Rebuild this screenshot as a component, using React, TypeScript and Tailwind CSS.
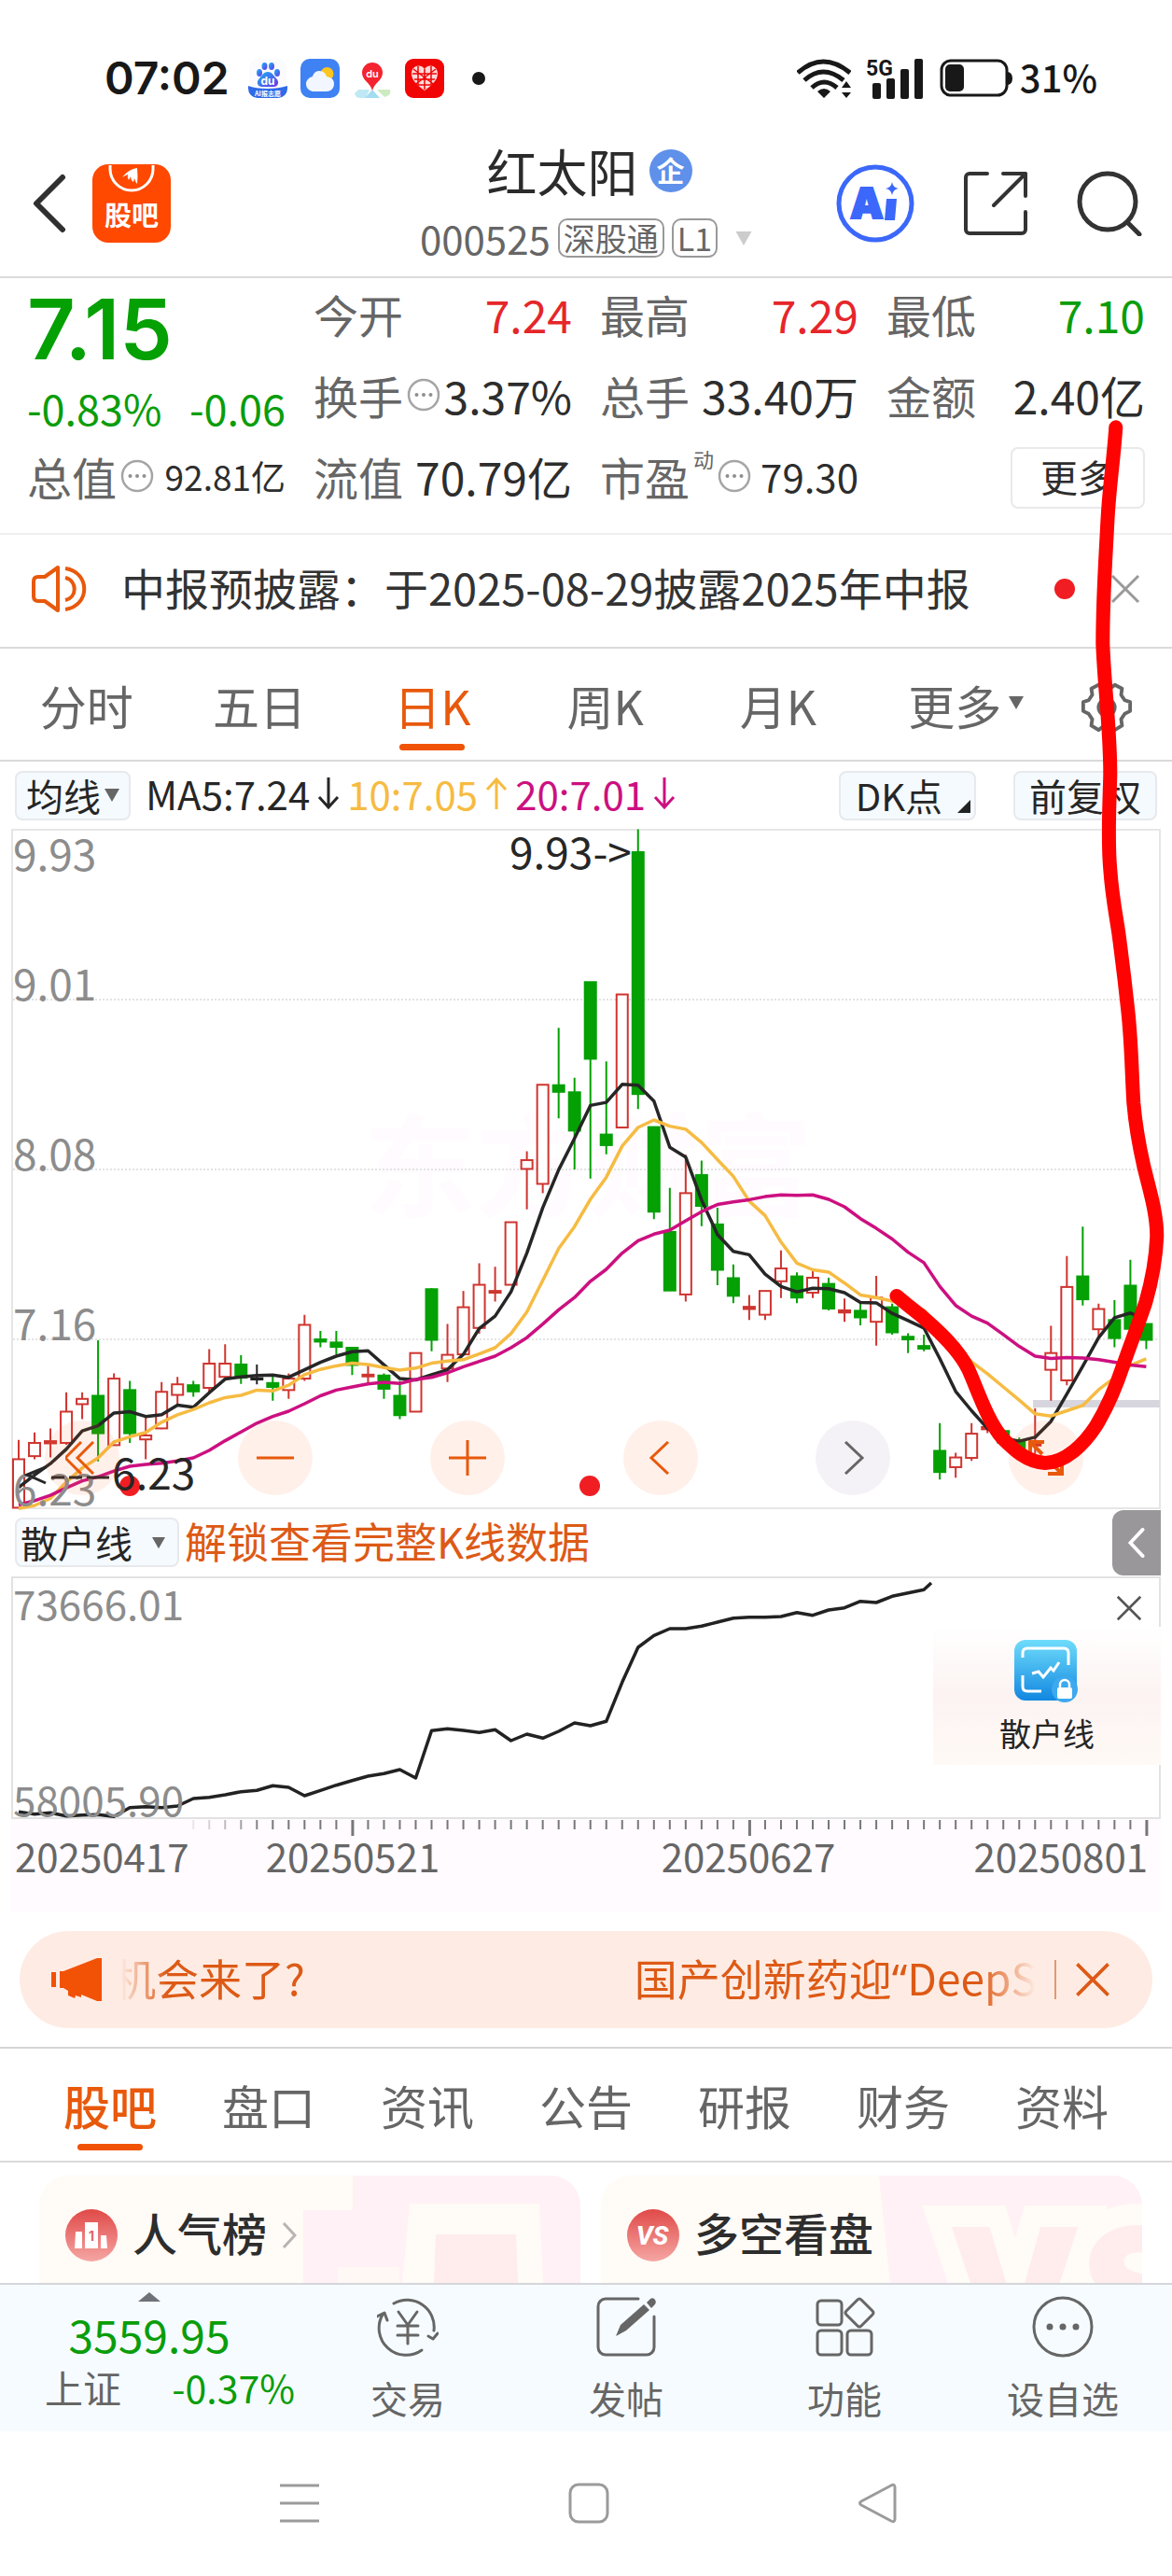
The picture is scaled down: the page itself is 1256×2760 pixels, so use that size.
import React from 'react';

type Candle = [kind: 'up' | 'down' | 'flat', high: number, top: number, bottom: number, low: number];

// Daily candles in plot units, 0 is the top of the plot and it grows downwards
const candles: Candle[] = [
  ['up', 1404, 1448, 1558, 1558], ['up', 1387, 1411, 1441, 1448], ['up', 1378, 1407, 1412, 1444],
  ['up', 1296, 1340, 1411, 1415], ['up', 1296, 1311, 1323, 1357], ['down', 1178, 1304, 1389, 1453],
  ['up', 1253, 1265, 1416, 1416], ['down', 1270, 1291, 1389, 1411], ['up', 1353, 1394, 1403, 1448],
  ['up', 1273, 1295, 1378, 1380], ['up', 1261, 1278, 1302, 1325], ['down', 1270, 1280, 1294, 1306],
  ['up', 1198, 1231, 1286, 1298], ['up', 1187, 1231, 1261, 1263], ['down', 1212, 1233, 1263, 1277],
  ['flat', 1233, 1264, 1267, 1278], ['down', 1260, 1275, 1284, 1315], ['up', 1253, 1265, 1291, 1311],
  ['up', 1120, 1143, 1265, 1270], ['down', 1157, 1176, 1181, 1194], ['down', 1157, 1183, 1193, 1210],
  ['down', 1193, 1195, 1234, 1257], ['up', 1233, 1256, 1260, 1275], ['down', 1253, 1258, 1288, 1311],
  ['down', 1270, 1304, 1348, 1357], ['up', 1207, 1207, 1340, 1340], ['down', 1060, 1062, 1177, 1203],
  ['up', 1141, 1211, 1242, 1273], ['up', 1066, 1103, 1210, 1210], ['up', 1003, 1052, 1150, 1163],
  ['up', 1011, 1066, 1070, 1090], ['up', 910, 910, 1052, 1052], ['up', 749, 769, 789, 881],
  ['up', 598, 598, 823, 844], ['down', 469, 599, 614, 674], ['down', 582, 615, 702, 790],
  ['down', 365, 365, 539, 811], ['down', 545, 711, 735, 756], ['up', 393, 393, 695, 695],
  ['down', 18, 70, 619, 653], ['down', 694, 694, 886, 903], ['down', 832, 932, 1065, 1065],
  ['up', 757, 844, 1074, 1090], ['down', 770, 803, 873, 919], ['down', 877, 915, 1018, 1053],
  ['down', 1006, 1037, 1077, 1094], ['up', 1075, 1102, 1107, 1132], ['up', 1066, 1066, 1120, 1132],
  ['up', 974, 1015, 1044, 1082], ['down', 1024, 1033, 1081, 1094], ['up', 1020, 1036, 1070, 1082],
  ['down', 1036, 1050, 1106, 1110], ['up', 1083, 1110, 1115, 1136], ['down', 1094, 1111, 1126, 1144],
  ['up', 1032, 1081, 1136, 1190], ['down', 1095, 1103, 1160, 1165], ['down', 1162, 1170, 1176, 1207],
  ['down', 1165, 1191, 1197, 1203], ['down', 1366, 1429, 1477, 1494], ['up', 1433, 1444, 1466, 1490],
  ['up', 1366, 1390, 1445, 1452], ['up', 1360, 1375, 1380, 1389], ['down', 1380, 1384, 1410, 1410],
  ['down', 1399, 1405, 1425, 1430], ['up', 1332, 1413, 1417, 1440], ['up', 1145, 1207, 1245, 1315],
  ['up', 987, 1057, 1269, 1280], ['down', 920, 1033, 1085, 1099], ['up', 1095, 1107, 1153, 1170],
  ['down', 1087, 1132, 1173, 1194], ['down', 995, 1054, 1152, 1175], ['down', 1141, 1141, 1177, 1198],
];

const ma5 = [
  1512, 1484, 1458, 1425, 1384, 1372, 1343, 1340, 1351, 1347, 1325, 1330, 1297, 1266, 1261, 1258, 1257, 1262,
  1245, 1228, 1214, 1204, 1202, 1234, 1265, 1268, 1256, 1245, 1210, 1151, 1123, 1068, 980, 877, 791, 720, 645,
  638, 597, 599, 635, 740, 762, 860, 938, 976, 984, 1028, 1056, 1068, 1060, 1061, 1070, 1092, 1093, 1117, 1133,
  1150, 1220, 1294, 1338, 1378, 1400, 1407, 1398, 1362, 1300, 1237, 1172, 1127, 1116, 1130,
];

const ma10 = [
  1560, 1553, 1537, 1500, 1468, 1445, 1409, 1397, 1387, 1364, 1347, 1335, 1320, 1308, 1303, 1291, 1293, 1280,
  1256, 1244, 1236, 1230, 1233, 1240, 1246, 1241, 1230, 1225, 1222, 1209, 1195, 1163, 1114, 1042, 970, 920, 858,
  808, 737, 695, 678, 692, 699, 729, 768, 806, 862, 895, 955, 1003, 1018, 1023, 1048, 1075, 1081, 1089, 1098,
  1110, 1150, 1190, 1227, 1254, 1284, 1314, 1345, 1350, 1338, 1326, 1290, 1263, 1235, 1220,
];

const ma20 = [
  1552, 1542, 1530, 1513, 1497, 1488, 1475, 1464, 1460, 1457, 1452, 1445, 1428, 1406, 1386, 1366, 1351, 1339,
  1322, 1304, 1291, 1284, 1277, 1273, 1276, 1267, 1262, 1252, 1238, 1226, 1214, 1195, 1172, 1141, 1109, 1081,
  1044, 1017, 980, 952, 937, 928, 907, 886, 870, 864, 859, 852, 848, 849, 848, 858, 875, 902, 924, 948, 978,
  1002, 1056, 1099, 1123, 1139, 1165, 1192, 1214, 1219, 1217, 1218, 1222, 1228, 1234, 1238,
];

const retail = [
  1027, 1034, 1030, 1040, 1037, 1036, 1042, 1013, 1010, 1013, 1008, 984, 980, 972, 962, 958, 943, 948, 975, 958,
  941, 926, 912, 904, 891, 918, 766, 760, 765, 772, 763, 798, 777, 790, 768, 741, 750, 736, 610, 498, 460, 438,
  438, 430, 417, 404, 401, 401, 399, 386, 395, 378, 371, 350, 354, 334, 323, 313,
];

const toX = (i: number) => 8 + i * 17.02;
const toY = (v: number) => v * 0.472 - 8;
const toLine = (values: number[]) => values.map((v, i) => `${toX(i).toFixed(1)},${toY(v).toFixed(1)}`).join(' ');
const retailLine = retail.map((v, i) => `${toX(i).toFixed(1)},${(v / 3 - 90).toFixed(1)}`).join(' ');

const candleColors = { up: '#cf3530', down: '#04a004', flat: '#222222' };

const Triangle = ({ className = '' }: { className?: string }) => (
  <svg viewBox="0 0 16 16" className={`h-4 w-4 ${className}`} fill="currentColor" aria-hidden="true">
    <path d="M0 1h16L8 15z" />
  </svg>
);

const CloseIcon = ({ className = '' }: { className?: string }) => (
  <svg viewBox="0 0 32 32" className={className} fill="none" stroke="currentColor" strokeWidth="3" aria-hidden="true">
    <path d="M2 2l28 28M30 2L2 30" />
  </svg>
);

const InfoDots = () => (
  <svg viewBox="0 0 36 36" className="h-9 w-9 shrink-0" aria-hidden="true">
    <circle cx="18" cy="18" r="16" fill="none" stroke="#a5a5a5" strokeWidth="2.5" />
    <g fill="#8f8f8f">
      <circle cx="10.5" cy="18" r="2" />
      <circle cx="18" cy="18" r="2" />
      <circle cx="25.5" cy="18" r="2" />
    </g>
  </svg>
);

const TrendArrow = ({ up = false }: { up?: boolean }) => (
  <svg viewBox="0 0 24 36" className="h-9 w-6" fill="none" stroke="currentColor" strokeWidth="3" aria-hidden="true">
    {up ? <path d="M12 35V3M2 14L12 3l10 11" /> : <path d="M12 1v32M2 22l10 11 10-11" />}
  </svg>
);

const StatusBar = () => (
  <div className="flex h-[168px] items-center justify-between pr-20 pl-28 text-[#181818]">
    <div className="flex items-center">
      <span className="w-[154px] text-[48px] leading-[60px] font-semibold font-['Inter',sans-serif]">07:02</span>
      <div className="flex items-center gap-[14px]">
        <svg viewBox="0 0 42 42" className="h-[42px] w-[42px]" aria-hidden="true">
          <defs>
            <linearGradient id="paw" x1="0" y1="0" x2="1" y2="1">
              <stop offset="0" stopColor="#18b3f5" />
              <stop offset="1" stopColor="#6a35e8" />
            </linearGradient>
          </defs>
          <rect x="1" width="40" height="42" rx="9" fill="#fbfbfd" />
          <g fill="url(#paw)">
            <ellipse cx="12" cy="15" rx="3" ry="4" />
            <ellipse cx="17.5" cy="8" rx="3" ry="4" />
            <ellipse cx="25" cy="8" rx="3" ry="4" />
            <ellipse cx="31" cy="15" rx="3" ry="4" />
            <path d="M21 14c5 0 6 4 9 7 4 4 2 9-3 9H15c-5 0-7-5-3-9 3-3 4-7 9-7z" />
          </g>
          <text x="21" y="28" textAnchor="middle" fontSize="12" fontWeight="700" fill="#fff" fontFamily="Inter">du</text>
          <path d="M0 29c10 4 30 4 42 0v3a10 10 0 0 1-10 10H10A10 10 0 0 1 0 32z" fill="#2f6ae8" />
          <text x="21" y="40" textAnchor="middle" fontSize="7" fontWeight="700" fill="#fff" fontFamily="Noto Sans CJK SC">AI报志愿</text>
        </svg>
        <svg viewBox="0 0 42 42" className="h-[42px] w-[42px]" aria-hidden="true">
          <rect width="42" height="42" rx="10" fill="#3f82f3" />
          <circle cx="28.5" cy="16" r="7" fill="#fdc51f" />
          <path d="M13 35a8 8 0 0 1-7-8c0-4 3-7 7-8 1-4 4-6 7-6 5 0 7 3 8 6 5 1 8 3 8 8s-4 8-8 8z" fill="#f2f6ff" />
        </svg>
        <svg viewBox="0 0 42 42" className="h-[42px] w-[42px]" aria-hidden="true">
          <path d="M6 33h12l-4 9H8q-5 0-6-5z" fill="#c0e8f4" />
          <path d="M21 33l8 9H13z" fill="#a4dcf2" />
          <path d="M26 33h14q2 6-6 8z" fill="#ccebc0" />
          <path d="M21 34c-2-8-11-11-11-19a11 11 0 0 1 22 0c0 8-9 11-11 19z" fill="#f3232f" />
          <text x="21" y="20" textAnchor="middle" fontSize="11" fontWeight="600" fill="#fff" fontFamily="Inter">du</text>
        </svg>
        <svg viewBox="0 0 42 42" className="h-[42px] w-[42px]" aria-hidden="true">
          <rect width="42" height="42" rx="9" fill="#f00404" />
          <path d="M21 11c4-6 14-4 14 5 0 8-9 14-14 18C16 30 7 24 7 16c0-9 10-11 14-5z" fill="#ffd9d9" />
          <path d="M8 16h26M10 22h22M14 28h14M14 8v20M21 11v22M28 8v20M9 11l24 18M33 11L9 29" stroke="#f00404" strokeWidth="1.5" />
        </svg>
        <span className="ml-4 h-[14px] w-[14px] rounded-full bg-[#181818]" />
      </div>
    </div>
    <div className="flex items-center">
      <svg viewBox="0 0 58 42" className="h-[42px] w-[58px]" fill="none" stroke="currentColor" strokeWidth="5" aria-hidden="true">
        <path d="M1 15q27-24 56 0M8 23q20-18 42 0M16 31q13-12 27 0" />
        <path d="M22 35q7-6 14 0l-7 7zM48 31l5-7 5 7zM48 36h10l-5 6z" fill="currentColor" stroke="none" />
      </svg>
      <svg viewBox="0 0 62 44" className="ml-4 h-11 w-[62px] overflow-visible" fill="currentColor" aria-hidden="true">
        <text x="0" y="19" fontSize="23" fontWeight="700" fontFamily="Roboto">5G</text>
        <rect x="7" y="27" width="9" height="17" rx="2" />
        <rect x="22" y="22" width="9" height="22" rx="2" />
        <rect x="37" y="12" width="9" height="32" rx="2" />
        <rect x="52" y="1" width="9" height="43" rx="2" />
      </svg>
      <svg viewBox="0 0 78 42" className="ml-[17px] h-[42px] w-[78px]" aria-hidden="true">
        <rect x="2" y="2" width="70" height="37" rx="10" fill="none" stroke="currentColor" strokeWidth="3" />
        <rect x="6" y="6" width="20" height="29" rx="5" fill="currentColor" />
        <path d="M73 14q5 1 5 7t-5 7z" fill="currentColor" />
      </svg>
      <span className="ml-2 pb-1 text-[40px] leading-[48px] font-medium">31%</span>
    </div>
  </div>
);

const Header = () => (
  <header className="grid h-[130px] grid-cols-[1fr_auto_1fr] items-center border-b-2 border-[#dadada] pr-8 pb-7 pl-[35px]">
    <div className="flex items-center gap-7">
      <button type="button" aria-label="返回">
        <svg viewBox="0 0 36 64" className="h-16 w-9" fill="none" stroke="#303030" strokeWidth="6" strokeLinecap="round" strokeLinejoin="round">
          <path d="M32 4L4 32l28 28" />
        </svg>
      </button>
      <a href="#guba" aria-label="股吧">
        <svg viewBox="0 0 84 84" className="h-[84px] w-[84px]">
          <rect width="84" height="84" rx="17" fill="#ff4800" />
          <path d="M19 1v4a23 23 0 0 0 46 0V1" fill="none" stroke="#fff" strokeWidth="3" />
          <path d="M32 14q7-9 16-10 1 9 0 17-2-2-3-6-1 4-1 4-3-2-3-6l-2 4q-2-3-1-6-3 1-6 3z" fill="#fff" />
          <text x="42" y="66" textAnchor="middle" fontSize="29" fontWeight="700" fill="#fff" fontFamily="Noto Sans CJK SC">股吧</text>
        </svg>
      </a>
    </div>
    <div className="-my-2 flex flex-col items-center gap-7">
      <h1 className="flex items-center gap-3 pl-1 text-[54px] leading-[40px] text-[#2b2b2b]">
        红太阳
        <span className="flex h-[46px] w-[46px] items-center justify-center rounded-full bg-[#5f90ea] pb-1 text-[30px] leading-[40px] font-bold text-white">
          企
        </span>
      </h1>
      <button type="button" className="flex items-center gap-2 text-[42px] leading-[38px] text-[#666]">
        000525
        <span className="rounded-[10px] border-2 border-[#999] px-1 text-[34px] leading-[38px]">深股通</span>
        <span className="rounded-[10px] border-2 border-[#999] px-1 text-[34px] leading-[38px]">L1</span>
        <Triangle className="ml-2 h-[17px] w-6 text-[#cccccc]" />
      </button>
    </div>
    <div className="flex items-center justify-end gap-[53px]">
      <button type="button" aria-label="Ai">
        <svg viewBox="0 0 84 84" className="h-[84px] w-[84px]">
          <circle cx="42" cy="42" r="39" fill="none" stroke="#3b68fa" strokeWidth="5" />
          <text x="15" y="58" fontFamily="Inter" fontSize="45" fontWeight="900" fill="#3b68fa" stroke="#3b68fa" strokeWidth="2">A</text>
          <path d="M54 37h11l-2 23H52z" fill="#3b68fa" />
          <path d="M60 19q1 6 7 7-6 1-7 7-1-6-7-7 6-1 7-7z" fill="#3b68fa" />
        </svg>
      </button>
      <button type="button" aria-label="分享">
        <svg viewBox="0 0 68 68" className="h-[68px] w-[68px]" fill="none" stroke="#333" strokeWidth="4" strokeLinecap="round" strokeLinejoin="round">
          <path d="M25 2H6a4 4 0 0 0-4 4v56a4 4 0 0 0 4 4h56a4 4 0 0 0 4-4V43M42 2h24v24M66 2L32 36" />
        </svg>
      </button>
      <button type="button" aria-label="搜索">
        <svg viewBox="0 0 70 70" className="h-[70px] w-[70px]" fill="none" stroke="#333" strokeWidth="5" strokeLinecap="round">
          <circle cx="33" cy="33" r="30" />
          <path d="M54 55l13 13" />
        </svg>
      </button>
    </div>
  </header>
);

const quoteColumns = [
  [
    { label: '今开', value: '7.24', color: 'text-[#e5262a]' },
    { label: '换手', value: '3.37%', info: true },
    { label: '流值', value: '70.79亿' },
  ],
  [
    { label: '最高', value: '7.29', color: 'text-[#e5262a]' },
    { label: '总手', value: '33.40万' },
    { label: '市盈', value: '79.30', info: true, sup: '动', small: true },
  ],
  [
    { label: '最低', value: '7.10', color: 'text-[#0a9d0a]' },
    { label: '金额', value: '2.40亿' },
  ],
];

const Quote = () => (
  <section className="grid grid-cols-4 gap-[30px] border-b-2 border-[#efefef] px-[29px] pb-3 text-[48px] leading-[60px] text-[#2d2d2d]">
    <div>
      <div className="flex h-[110px] items-center text-[90px] leading-[90px] font-semibold text-[#04a004] font-['Inter',sans-serif]">7.15</div>
      <div className="flex h-[62px] items-center justify-between pb-1 text-[45px] text-[#0a9d0a]">
        <span>-0.83%</span>
        <span>-0.06</span>
      </div>
      <div className="flex h-[87px] items-center justify-between pb-2">
        <span className="flex items-center gap-1 text-[#666]">
          总值
          <InfoDots />
        </span>
        <span className="text-[37px]">92.81亿</span>
      </div>
    </div>
    {quoteColumns.map((rows, i) => (
      <div key={i}>
        {rows.map((row) => (
          <div key={row.label} className="flex h-[87px] items-center justify-between pb-3 whitespace-nowrap">
            <span className="relative flex items-center gap-1 text-[#666]">
              {row.label}
              {row.sup && <sup className="top-0 self-start text-[22px] leading-[22px]">{row.sup}</sup>}
              {row.info && <InfoDots />}
            </span>
            <span className={`${row.color ?? ''} ${row.small ? 'text-[42px]' : ''}`}>{row.value}</span>
          </div>
        ))}
        {i === 2 && (
          <div className="flex h-[87px] items-center justify-end pb-2">
            <button type="button" className="h-[66px] w-[144px] rounded-lg border-2 border-[#e9e9e9] pb-1 text-[40px] leading-[56px]">
              更多
            </button>
          </div>
        )}
      </div>
    ))}
  </section>
);

const Notice = () => (
  <div className="flex h-[122px] items-center border-b-2 border-[#dadada] pr-[34px] pb-1 pl-[34px]">
    <svg viewBox="0 0 60 52" className="h-[52px] w-[60px] shrink-0" fill="none" stroke="#e8590c" strokeWidth="4" strokeLinejoin="round" aria-hidden="true">
      <path d="M28 3v46L14 39H7q-5 0-5-5V18q0-5 5-5h7zM36 4c27 4 27 40 0 44M36 14c13 3 13 21 0 24" />
    </svg>
    <p className="ml-9 flex-1 pb-1 text-[47px] leading-[60px] whitespace-nowrap text-[#333]">中报预披露：于2025-08-29披露2025年中报</p>
    <span className="h-[22px] w-[22px] rounded-full bg-[#f01d23]" />
    <button type="button" aria-label="关闭" className="ml-[38px] text-[#999]">
      <CloseIcon className="h-8 w-8" />
    </button>
  </div>
);

const periods = ['分时', '五日', '日K', '周K', '月K'];

const PeriodTabs = () => (
  <nav className="flex h-[121px] border-b-2 border-[#dadada] text-[50px] text-[#666]">
    {periods.map((name) => (
      <button key={name} type="button" className={`flex flex-1 flex-col items-center pt-[18px] ${name === '日K' ? 'text-[#e8590c]' : ''}`}>
        <span className="leading-[84px]">{name}</span>
        {name === '日K' && <span className="h-[7px] w-[70px] rounded-full bg-[#f05306]" />}
      </button>
    ))}
    <button type="button" className="flex flex-1 justify-center gap-2 pt-[18px] pl-4 leading-[84px]">
      更多
      <Triangle className="mt-8" />
    </button>
    <button type="button" aria-label="设置" className="flex w-[128px] justify-center pt-[34px] pr-3">
      <svg viewBox="0 0 60 60" className="h-[58px] w-[60px]" fill="none" stroke="currentColor" strokeWidth="4" strokeLinejoin="round">
        <path d="M21 5l5 4h8l5-4 8 4-1 7 4 6 6 2v10l-6 3-4 6 1 7-8 5-5-4h-8l-5 4-8-5 1-7-4-6-6-3V24l6-2 4-6-1-7z" />
        <circle cx="30" cy="30" r="9" />
      </svg>
    </button>
  </nav>
);

const chip = 'flex items-center rounded-lg border-2 border-[#e8e9ec] bg-[#f5fafe] text-[40px] leading-[49px] text-[#262626]';

const Indicators = () => (
  <div className="flex h-[72px] items-center px-4">
    <label className={`${chip} px-[10px]`}>
      <select aria-label="均线" className="appearance-none bg-transparent">
        <option>均线</option>
      </select>
      <Triangle className="ml-1 h-[18px] text-[#666]" />
    </label>
    <div className="ml-4 flex items-center gap-2 pb-1 text-[42px] leading-[52px] whitespace-nowrap">
      <span className="flex items-center gap-2 text-[#262626]">MA5:7.24<TrendArrow /></span>
      <span className="flex items-center gap-2 text-[#f6bb42]">10:7.05<TrendArrow up /></span>
      <span className="flex items-center gap-2 text-[#cc1080]">20:7.01<TrendArrow /></span>
    </div>
    <button type="button" className={`${chip} ml-auto gap-4 pr-1 pl-4`}>
      DK点
      <svg viewBox="0 0 14 14" className="mt-6 h-[14px] w-[14px]" aria-hidden="true">
        <path d="M14 0v14H0z" fill="#222" />
      </svg>
    </button>
    <button type="button" className={`${chip} ml-10 px-[15px]`}>前复权</button>
  </div>
);

const roundButton = 'flex h-20 w-20 items-center justify-center rounded-full bg-[#ff6a33]/10 text-[#e8590c]';

const KLineChart = () => (
  <div className="relative mx-3">
    <svg viewBox="0 0 1232 728" className="block w-full overflow-visible" fontFamily="'Noto Sans CJK SC', sans-serif" role="img" aria-label="日K线图">
      <rect x="1" y="1" width="1230" height="727" fill="none" stroke="#e6e6e6" strokeWidth="2" />
      <text x="378" y="407" fontSize="120" fontWeight="600" fill="#fffbfe">东方财富</text>
      <path d="M2 183h1228M2 365h1228M2 547h1228" stroke="#e3e3e3" strokeWidth="2" strokeDasharray="2 2" />
      <path d="M1095 616h136" stroke="#d7d6df" strokeWidth="8" />
      {candles.map(([kind, high, top, bottom, low], i) => {
        const x = toX(i);
        const color = candleColors[kind];
        const hollow = kind === 'up' && bottom - top > 6;
        return (
          <g key={i} stroke={color} strokeWidth="2">
            <path d={`M${x} ${toY(high)}V${toY(top)}M${x} ${toY(bottom)}V${toY(low)}`} />
            <rect
              x={x - 6}
              y={toY(top)}
              width="12"
              height={Math.max(toY(bottom) - toY(top), 1)}
              fill={hollow ? '#fff' : color}
            />
          </g>
        );
      })}
      <g fill="none" strokeWidth="3.5" strokeLinejoin="round">
        <polyline points={toLine(ma5)} stroke="#262626" />
        <polyline points={toLine(ma10)} stroke="#f6bb42" />
        <polyline points={toLine(ma20)} stroke="#cc1080" />
      </g>
      <g fontSize="46" fill="#8c8c8c">
        <text x="2" y="45">9.93</text>
        <text x="2" y="184">9.01</text>
        <text x="2" y="366">8.08</text>
        <text x="2" y="548">7.16</text>
        <text x="2" y="725">6.23</text>
      </g>
      <circle cx="127" cy="704" r="11" fill="#f01d23" />
      <circle cx="620" cy="704" r="11" fill="#f01d23" />
      <g fontSize="46" fill="#262626">
        <text x="534" y="43">9.93-&gt;</text>
        <text x="108" y="708">6.23</text>
      </g>
      <path d="M37 684l-20 8 20 9M43 695h14M62 695h14M81 695h24" fill="none" stroke="#262626" strokeWidth="3" />
    </svg>
    <div className="absolute right-[83px] bottom-[14px] left-9 flex justify-between">
      <button type="button" aria-label="最早" className={roundButton}>
        <svg viewBox="0 0 36 36" className="h-9 w-9" fill="none" stroke="currentColor" strokeWidth="3">
          <path d="M17 1L0 18l17 17M30 1L13 18l17 17" />
        </svg>
      </button>
      <button type="button" aria-label="缩小" className={roundButton}>
        <svg viewBox="0 0 40 40" className="h-10 w-10" stroke="currentColor" strokeWidth="3">
          <path d="M0 20h40" />
        </svg>
      </button>
      <button type="button" aria-label="放大" className={roundButton}>
        <svg viewBox="0 0 40 40" className="h-10 w-10" stroke="currentColor" strokeWidth="3">
          <path d="M0 20h40M20 1v38" />
        </svg>
      </button>
      <button type="button" aria-label="左移" className={roundButton}>
        <svg viewBox="0 0 36 36" className="h-9 w-9" fill="none" stroke="currentColor" strokeWidth="3">
          <path d="M26 1L8 18l18 17" />
        </svg>
      </button>
      <button type="button" aria-label="右移" className="flex h-20 w-20 items-center justify-center rounded-full bg-[#f5f2f7] text-[#666]">
        <svg viewBox="0 0 36 36" className="h-9 w-9" fill="none" stroke="currentColor" strokeWidth="3">
          <path d="M10 1l18 17-18 17" />
        </svg>
      </button>
      <button type="button" aria-label="全屏" className={roundButton}>
        <svg viewBox="0 0 40 40" className="h-10 w-10" fill="none" stroke="currentColor" strokeWidth="4">
          <path d="M18 3H3v15M3 3l13 13M22 37h15V22M37 37L26 26" />
        </svg>
      </button>
    </div>
  </div>
);

const SubIndicator = () => (
  <div className="mr-3 flex h-[73px] items-center pl-4">
    <label className={`${chip} pr-1 pl-1`}>
      <select aria-label="副图指标" className="appearance-none bg-transparent">
        <option>散户线</option>
      </select>
      <Triangle className="mr-2 ml-5 h-[14px] text-[#666]" />
    </label>
    <a href="#unlock" className="ml-[6px] flex-1 pb-1 text-[45px] leading-[56px] text-[#dd5a16]">解锁查看完整K线数据</a>
    <button type="button" aria-label="展开" className="flex h-[70px] w-[52px] items-center justify-center rounded-l-xl bg-[#99979a]">
      <svg viewBox="0 0 20 34" className="h-8 w-5" fill="none" stroke="#fff" strokeWidth="4" strokeLinecap="round">
        <path d="M17 2L3 17l14 15" />
      </svg>
    </button>
  </div>
);

const RetailChart = () => (
  <div className="relative mx-3">
    <svg viewBox="0 0 1232 360" className="block w-full" fontFamily="'Noto Sans CJK SC', sans-serif" role="img" aria-label="散户线">
      <defs>
        <linearGradient id="tickFade" gradientUnits="userSpaceOnUse" x1="190" y1="0" x2="270" y2="0">
          <stop offset="0" stopColor="#aaaaaa" stopOpacity="0.2" />
          <stop offset="1" stopColor="#777777" />
        </linearGradient>
      </defs>
      <rect y="259" width="1232" height="101" fill="#fffbff" />
      <rect x="1" y="1" width="1230" height="258" fill="#fff" stroke="#e2e2e2" strokeWidth="2" />
      <polyline points={`${retailLine} 986,7`} fill="none" stroke="#222" strokeWidth="3.5" strokeLinejoin="round" />
      <g fontSize="44" fill="#8c8c8c">
        <text x="2" y="47">73666.01</text>
        <text x="2" y="257">58005.90</text>
      </g>
      {Array.from({ length: 61 }, (_, k) => k + 11).map((i) => {
        const major = (i - 21) % 25 === 0;
        return (
          <rect
            key={i}
            x={toX(i) - 1}
            y="261"
            width={major ? 3 : 2}
            height={major ? 17 : 10}
            fill={i < 16 ? 'url(#tickFade)' : '#777777'}
          />
        );
      })}
      <g fontSize="42" fill="#666">
        <text x="4" y="317">20250417</text>
        <text x="366" y="317" textAnchor="middle">20250521</text>
        <text x="790" y="317" textAnchor="middle">20250627</text>
        <text x="1218" y="317" textAnchor="end">20250801</text>
      </g>
    </svg>
    <button type="button" aria-label="关闭" className="absolute top-5 right-5 text-[#555]">
      <CloseIcon className="h-7 w-7" />
    </button>
    <button
      type="button"
      className="absolute top-[54px] right-0 flex w-[244px] flex-col items-center bg-linear-to-b from-white via-[#fcf3f2] to-[#fffaf6] pt-[14px] pb-3"
    >
      <svg viewBox="0 0 70 70" className="h-[70px] w-[70px]" aria-hidden="true">
        <defs>
          <linearGradient id="lockTile" x1="0" y1="0" x2="0" y2="1">
            <stop offset="0" stopColor="#6fdcfb" />
            <stop offset="1" stopColor="#1187e0" />
          </linearGradient>
        </defs>
        <rect width="67" height="65" rx="12" fill="url(#lockTile)" />
        <path d="M9 19v-5q0-5 5-5h39q5 0 5 5v13M9 38v12q0 5 5 5h15M19 36l7-2 5 6 8-10 3 3 6-9" fill="none" stroke="#fff" strokeWidth="3" />
        <circle cx="54" cy="53" r="14" fill="#3da9ee" />
        <rect x="46" y="51" width="16" height="12" rx="2" fill="#fff" />
        <path d="M49 51v-3a5 5 0 0 1 10 0v3" fill="none" stroke="#fff" strokeWidth="2.5" />
      </svg>
      <span className="mt-2 text-[34px] leading-[44px] text-[#262626]">散户线</span>
    </button>
  </div>
);

const Marquee = () => (
  <div className="border-b-2 border-[#d6d6d6] px-[21px] py-5">
    <div className="flex h-[104px] items-center rounded-full bg-[#feece4] pr-[45px] pl-[34px] text-[#dd5a16]">
      <svg viewBox="0 0 54 46" className="h-[46px] w-[54px] shrink-0" fill="#f25206" aria-hidden="true">
        <path d="M0 15h5v16H0zM9 14h4L49 0h5v46h-5l-17-7v3l-6-2-1 3-7-3v-5l-5-3H9z" />
      </svg>
      <div className="ml-5 min-w-0 flex-1 overflow-hidden pb-1 [mask-image:linear-gradient(to_right,transparent,black_50px,black_calc(100%-60px),transparent)]">
        <div className="-ml-2 flex gap-[353px] text-[46px] leading-[64px] whitespace-nowrap">
          <span>机会来了?</span>
          <span>国产创新药迎<span className="font-['Noto_Sans',sans-serif]">“</span>DeepS</span>
        </div>
      </div>
      <span className="ml-5 h-[42px] w-[2px] bg-[#e2986f]" />
      <button type="button" aria-label="关闭" className="ml-5">
        <CloseIcon className="h-[38px] w-[38px]" />
      </button>
    </div>
  </div>
);

const sections = ['股吧', '盘口', '资讯', '公告', '研报', '财务', '资料'];

const SectionTabs = () => (
  <nav className="grid h-[122px] grid-cols-7 border-b-2 border-[#dadada] px-[33px] text-[50px] text-[#666]">
    {sections.map((name, i) => (
      <a key={name} href={`#tab-${i}`} className={`flex flex-col items-center pt-[18px] ${i === 0 ? 'text-[#e8590c]' : ''}`}>
        <span className={`leading-[84px] ${i === 0 ? 'font-medium' : ''}`}>{name}</span>
        {i === 0 && <span className="h-[7px] w-[70px] rounded-full bg-[#f05306]" />}
      </a>
    ))}
  </nav>
);

const Cards = () => (
  <div className="grid grid-cols-2 gap-[22px] pt-[14px] pr-8 pl-[42px]">
    <a href="#rank" className="relative flex h-[115px] items-center gap-4 overflow-hidden rounded-t-[32px] bg-[#fffbf6] pt-3 pl-7">
      <svg viewBox="0 0 580 115" className="absolute inset-0 h-full w-full" preserveAspectRatio="xMaxYMid slice" aria-hidden="true">
        <path d="M336 0h244v115h-40L536 30H397l-8 85H283V37h53z" fill="#fff1f5" />
        <path d="M425 63h86l2 52h-90z" fill="#ffecec" />
        <path d="M320 98h66v17h-66z" fill="#fff8f4" />
      </svg>
      <svg viewBox="0 0 56 56" className="relative h-14 w-14" aria-hidden="true">
        <defs>
          <linearGradient id="badge" x1="0" y1="0" x2="0" y2="1">
            <stop offset="0" stopColor="#e04a48" />
            <stop offset="1" stopColor="#f5a6a3" />
          </linearGradient>
        </defs>
        <circle cx="28" cy="28" r="28" fill="url(#badge)" />
        <path d="M11 24h7v18h-8zM21 14h14v28H21zM38 28h6l1 14h-7z" fill="#fff" />
        <text x="28" y="34" textAnchor="middle" fontSize="14" fontWeight="700" fill="#e36563" fontFamily="Inter">1</text>
      </svg>
      <span className="relative pb-2 text-[48px] leading-[64px] font-medium text-[#2d2d2d]">人气榜</span>
      <svg viewBox="0 0 16 28" className="relative h-7 w-4" fill="none" stroke="#b9b3b3" strokeWidth="3" aria-hidden="true">
        <path d="M2 1l12 13L2 27" />
      </svg>
    </a>
    <a href="#vs" className="relative flex h-[115px] items-center gap-4 overflow-hidden rounded-t-[32px] bg-[#fffbf6] pt-3 pl-7">
      <svg viewBox="0 0 580 115" className="absolute inset-0 h-full w-full" preserveAspectRatio="xMaxYMid slice" aria-hidden="true">
        <path d="M298 0h282v115H310z" fill="#fff1f5" />
        <text
          x="372"
          y="186"
          fontSize="180"
          fontWeight="900"
          fontFamily="Inter"
          fill="#ffecec"
          stroke="#fffbf6"
          strokeWidth="46"
          paintOrder="stroke"
        >
          VS
        </text>
      </svg>
      <svg viewBox="0 0 56 56" className="relative h-14 w-14" aria-hidden="true">
        <circle cx="28" cy="28" r="28" fill="url(#badge)" />
        <text x="27" y="38" textAnchor="middle" fontSize="28" fontWeight="800" fontStyle="italic" fill="#fff" fontFamily="Roboto">VS</text>
      </svg>
      <span className="relative pb-2 text-[48px] leading-[64px] font-medium text-[#2d2d2d]">多空看盘</span>
    </a>
  </div>
);

const actions = [
  {
    name: '交易',
    icon: (
      <>
        <path d="M18 8a29 29 0 0 1 43 29M48 58A29 29 0 0 1 6 20M0 22l8-4 3 8M55 43l5 3 5-6" />
        <path d="M23 17l10 14 10-14M22 32h22M22 42h22M33 31v20" />
      </>
    ),
  },
  {
    name: '发帖',
    icon: (
      <>
        <path d="M46 3H11a8 8 0 0 0-8 8v44a8 8 0 0 0 8 8h44a8 8 0 0 0 8-8V22" />
        <path d="M22 43l5-12 25-22 6 6-25 22z" fill="currentColor" stroke="none" />
        <path d="M55 7l4-4q3-2 5 1t-1 6l-3 3z" fill="currentColor" stroke="none" />
      </>
    ),
  },
  {
    name: '功能',
    icon: (
      <>
        <rect x="4" y="5" width="26" height="26" rx="4" />
        <rect x="4" y="37" width="26" height="26" rx="4" />
        <rect x="36" y="37" width="26" height="26" rx="4" />
        <path d="M47 4q2-2 4 0l12 12q2 2 0 4L51 32q-2 2-4 0L35 20q-2-2 0-4z" />
      </>
    ),
  },
  {
    name: '设自选',
    icon: (
      <>
        <circle cx="33" cy="33" r="31" />
        <path d="M19 33h0M33 33h0M47 33h0" strokeWidth="7" />
      </>
    ),
  },
];

const BottomBar = () => (
  <footer className="flex h-[159px] border-t-2 border-[#d5d5de] bg-[#f6fbff] text-[#666]">
    <a href="#index" className="flex w-[320px] flex-col items-center">
      <svg viewBox="0 0 24 10" className="mt-2 h-[10px] w-6" fill="#6f7278" aria-hidden="true">
        <path d="M12 0l12 10H0z" />
      </svg>
      <span className="mt-1 text-[48px] leading-[60px] text-[#0a9d0a]">3559.95</span>
      <span className="flex w-full justify-between pr-1 pl-12 text-[41px] leading-[54px]">
        上证
        <span className="text-[#0a9d0a]">-0.37%</span>
      </span>
    </a>
    {actions.map((action) => (
      <button key={action.name} type="button" className="flex flex-1 flex-col items-center pt-3">
        <svg
          viewBox="0 0 66 66"
          className="h-[66px] w-[66px]"
          fill="none"
          stroke="currentColor"
          strokeWidth="3"
          strokeLinecap="round"
          strokeLinejoin="round"
          aria-hidden="true"
        >
          {action.icon}
        </svg>
        <span className="mt-4 text-[40px] leading-[54px]">{action.name}</span>
      </button>
    ))}
  </footer>
);

const SystemNav = () => (
  <div className="flex h-[154px] items-center justify-between pr-[295px] pl-[300px] text-[#9b9b9b]">
    <button type="button" aria-label="菜单">
      <svg viewBox="0 0 42 44" className="h-11 w-[42px]" stroke="currentColor" strokeWidth="3">
        <path d="M0 3h42M0 22h42M0 41h42" />
      </svg>
    </button>
    <button type="button" aria-label="主屏幕">
      <svg viewBox="0 0 44 44" className="h-11 w-11" fill="none" stroke="currentColor" strokeWidth="3">
        <rect x="2" y="2" width="40" height="40" rx="9" />
      </svg>
    </button>
    <button type="button" aria-label="后退">
      <svg viewBox="0 0 42 44" className="h-11 w-[42px]" fill="none" stroke="currentColor" strokeWidth="3" strokeLinejoin="round">
        <path d="M36 3q4-2 4 2v34q0 4-4 2L4 24q-3-2 0-4z" />
      </svg>
    </button>
  </div>
);

const App = (): React.ReactElement => {
  return (
    <div className="relative overflow-hidden bg-white font-['Noto_Sans_CJK_SC',sans-serif]">
      <StatusBar />
      <Header />
      <main>
        <Quote />
        <Notice />
        <PeriodTabs />
        <Indicators />
        <KLineChart />
        <SubIndicator />
        <RetailChart />
        <Marquee />
        <SectionTabs />
        <Cards />
      </main>
      <BottomBar />
      <SystemNav />

      {/* hand-drawn marker line across the page */}
      <svg viewBox="0 0 1256 2760" className="pointer-events-none absolute inset-0 h-full w-full" aria-hidden="true">
        <path
          d="M1196 458C1193 500 1189 520 1187 560C1185 600 1182 640 1182 690C1184 740 1190 780 1190 830C1189 870 1187 900 1190 932C1192 960 1196 980 1199 1000C1203 1030 1206 1055 1209 1083C1213 1120 1213 1150 1215 1182C1217 1205 1221 1228 1226 1250C1232 1275 1240 1300 1240 1325C1239 1350 1234 1375 1228 1396C1220 1420 1212 1440 1204 1463C1195 1490 1187 1508 1175 1528C1162 1548 1142 1568 1120 1568C1100 1567 1086 1553 1074 1541C1058 1522 1048 1490 1038 1468C1028 1447 1008 1428 987 1410Q974 1400 961 1389"
          fill="none"
          stroke="#ff0202"
          strokeWidth="15"
          strokeLinecap="round"
          strokeLinejoin="round"
        />
      </svg>
    </div>
  );
};

export default App;
